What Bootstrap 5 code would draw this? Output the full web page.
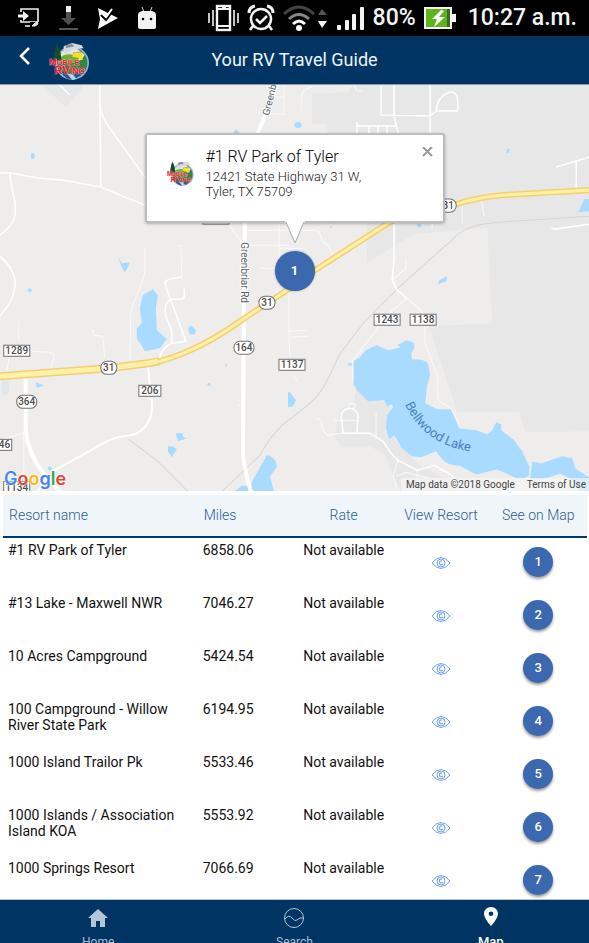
<!DOCTYPE html>
<html lang="en">
<head>
<meta charset="utf-8">
<meta name="viewport" content="width=device-width, initial-scale=1">
<title>Your RV Travel Guide</title>
<link href="https://cdn.jsdelivr.net/npm/bootstrap@5.3.0/dist/css/bootstrap.min.css" rel="stylesheet">
<style>
  :root { --navy: #003563; --pin: #3c68b0; }
  body { font-family: Roboto, "Liberation Sans", sans-serif; color: #111; }
  svg { display: block; flex: none; }
  .phone-status { height: 36px; background: #000; color: #f4f4f4; font-size: 23px; line-height: 36px; font-weight: 500; padding: 0 12px 0 18px; }
  .left-icons { gap: 19px; }
  .app-header { display: grid; grid-template-columns: 1fr auto 1fr; height: 48px; background: var(--navy); padding: 0 12px; }
  .app-header h1 { font-size: 18px; line-height: 24px; font-weight: 400; color: #eef3f8; }
  .back-btn { width: 24px; height: 36px; }
  .map-area { --bs-aspect-ratio: 69%; background: #eeedec; border-top: 1px solid #8f9aa8; }
  .callout { position: absolute; top: 48px; left: 0; height: auto; }
  .info-box { width: 300px; min-height: 90px; border: 2px solid #bdbdbd; border-radius: 3px; box-shadow: 0 1px 3px #0004; padding: 12px 8px 12px 20px; gap: 11px; }
  .info-box h2 { font-size: 16px; line-height: 20px; font-weight: 300; color: #000; margin-bottom: 2px; }
  .info-box address { font-size: 13px; line-height: 15px; font-weight: 300; color: #222; margin: 0; }
  .info-box button { width: 16px; height: 14px; }
  .tip { margin-top: -2px; z-index: 1; }
  .round-pin { width: 30px; height: 30px; border-radius: 50%; background: var(--pin); color: #fff; font-size: 13px; line-height: 30px; font-weight: 500; box-shadow: 0 2px 3px #0006; }
  .round-pin.big { width: 40px; height: 40px; margin-top: 7px; font-weight: 700; line-height: 40px; box-shadow: 0 0 2px #0006; }
  .attribution { position: absolute; top: auto; left: auto; right: 0; bottom: 0; width: auto; height: auto; background: #f5f5f5b0; color: #444; font-size: 10px; line-height: 13px; padding: 0 3px 0 5px; gap: 12px; }
  .g-brand { position: absolute; top: auto; left: 4px; bottom: 0; height: auto; width: auto; font-family: Inter, Roboto, sans-serif; font-size: 18px; line-height: 24px; font-weight: 600; text-shadow: 0 0 2px #fff, 0 0 2px #fff; }
  .resort-area { padding: 4px 2px 0 3px; }
  .resorts { table-layout: fixed; border-collapse: separate; border-spacing: 0; font-size: 14px; line-height: 16px; --bs-table-color: #111; }
  .resorts th { height: 43px; background: #f0f5fa; color: #2d6092; font-weight: 300; padding: 0 6px 2px; vertical-align: middle; }
  .resorts thead th { border-bottom: 2px solid #003a6b; }
  .resorts td { height: 53px; padding: 4px 5px 0; }
  .resorts td.pin-cell { padding-top: 9px; }
  .resorts td.eye-cell { padding-top: 18px; }
  .tabs-bar { height: 44px; background: var(--navy); border-top: 1px solid #b5c1cd; }
  .tabs-bar a { color: #a9bdd1; font-size: 12px; line-height: 14px; padding-top: 7px; gap: 6px; }
  .tabs-bar a.current { color: #fff; font-size: 13px; font-weight: 500; }
  .land { fill: #e7e7e7; }
  .water { fill: #a9daff; }
  .road { fill: none; stroke: #fff; stroke-width: 2; stroke-linejoin: round; }
  .lane { fill: none; stroke: #fafafa; stroke-width: 1; }
  .main-road { fill: none; stroke: #fff; stroke-width: 4; }
  .rail { fill: none; stroke: #d3d5d7; stroke-width: 1; }
  .sign { fill: #fff; stroke: #707070; stroke-width: 1; }
  .sign-text { font-size: 10px; font-weight: 500; fill: #4d4d4d; text-anchor: middle; }
  .street { font-size: 10px; fill: #56616b; stroke: #fff; stroke-width: 2px; paint-order: stroke; }
</style>
</head>
<body class="d-flex flex-column vh-100 overflow-hidden bg-white">

<svg width="0" height="0" class="position-absolute" aria-hidden="true">
  <symbol id="logo" viewBox="0 0 40 38">
    <circle cx="22" cy="20" r="16" fill="#8db5df"/>
    <circle cx="22" cy="20" r="14.500" fill="#37833f"/>
    <path d="M9 13Q14 5 25 5l9 7-3 5-20 1Z" fill="#dce6ee"/>
    <path d="M9 16q9-8 20-1l-3 5H9Z" fill="#74ae2f"/>
    <path d="M23 10l8-1v4l-8 1Z" fill="#a9825c"/>
    <path d="M24 10h8v7l-5-2-5-1Z" fill="#f7df22"/>
    <path d="M14 4l8-3 9 2 2 3-10 1-6 4-3-2Z" fill="#d6d9df"/>
    <path d="M16 3l6-1 2 2-8 2Z" fill="#7e8c9b"/>
    <path d="M8 1l2 5 1 4 1 8H4l1-7 1-5Z" fill="#164b2b"/>
    <path d="M13 28q7 2 9 8-7-1-10-7ZM24 29l9-3q-2 6-8 9Z" fill="#28508a"/>
    <path d="M17 30l6 1 3 4-4 1Z" fill="#b4d7ec"/>
    <g font-family="Liberation Sans, sans-serif" font-weight="700" fill="#ed1834" stroke="#f4d9e0" stroke-width=".5" paint-order="stroke">
      <text x="0" y="22" font-size="9">M<tspan font-size="7">OBILE</tspan></text>
      <text x="5" y="30" font-size="11">RV<tspan font-size="8">ING</tspan></text>
    </g>
  </symbol>
  <symbol id="eye" viewBox="0 0 20 14">
    <g fill="none" stroke="#70a5f4"><path d="M1 7Q10-4 19 7 10 18 1 7Z"/><circle cx="10" cy="7" r="4"/><path d="M11 5a2 2 0 1 0 1 3" stroke-width="1.200"/></g>
  </symbol>
</svg>

<div class="phone-status d-flex align-items-center justify-content-between flex-shrink-0">
  <div class="left-icons d-flex align-items-center">
    <svg width="22" height="22" viewBox="0 0 22 22" fill="none" stroke="#f2f2f2" stroke-width="1.600"><path d="M3 5V2h17v13H3v-2M7 19h6"/><path d="M0 9h6" stroke-width="3"/><path d="M5 4l6 5-6 5Z" fill="#f2f2f2" stroke="none"/><path d="M12 15h9v6h-9Z" fill="#000" stroke="none"/><path d="M14 19l3-3q3-2 3 0t-3 3Z" fill="#ddd" stroke-width="1"/></svg>
    <svg width="19" height="26" viewBox="0 0 19 26"><path d="M7 6h5v7h5l-7.500 7L2 13h5Z" fill="#505050"/><path d="M7 1h5v6H7Z" fill="#eee"/><path d="M0 23h19v2H0Z" fill="#555"/></svg>
    <svg width="21" height="23" viewBox="0 0 21 23"><path d="M1 1l20 10L1 22l2-10Z" fill="#fff"/><path d="M4 8l5 5 7-9" fill="none" stroke="#000" stroke-width="2"/><path d="M5 6l4 4 6-8" fill="none" stroke="#fff" stroke-width="2"/></svg>
    <svg width="20" height="25" viewBox="0 0 20 25"><path d="M5 1l2 5M15 1l-2 5" stroke="#ddd"/><path d="M1 9q0-3 4-4h10q4 1 4 4v12q0 2-3 2H4q-3 0-3-2Z" fill="#f2f2f2"/><circle cx="6" cy="13" r="1.300"/><circle cx="14" cy="13" r="1.300"/></svg>
  </div>
  <div class="d-flex align-items-center gap-2">
    <svg width="31" height="28" viewBox="0 0 31 28" fill="none" stroke="#f4f4f4" stroke-width="2"><path d="M1 9v10M5 6v16M26 6v16M30 9v10" stroke-width="1.600"/><rect x="9" y="2" width="13" height="24" stroke-width="2.400"/><path d="M9 5h13M14 3h4M9 22h13"/></svg>
    <svg width="28" height="28" viewBox="0 0 28 28" fill="none" stroke="#f4f4f4" stroke-width="2.500"><circle cx="14" cy="15" r="10"/><path d="M9 15l4 4 7-7M6 22l-3 4M22 22l3 4"/><path d="M2 9q0-6 6-7M26 9q0-6-6-7" stroke-width="3"/></svg>
    <svg width="46" height="28" viewBox="0 0 46 28" fill="none"><path d="M1 10q15-14 30 0" stroke="#444" stroke-width="3"/><path d="M6 15q10-9 20 0" stroke="#888" stroke-width="3"/><path d="M10 20q6-6 12 0" stroke="#fff" stroke-width="3"/><circle cx="16" cy="24" r="3" fill="#fff"/><path d="M35 11l4-6 5 6Z" fill="#555"/><path d="M35 17h9l-5 7Z" fill="#fff"/></svg>
    <svg width="28" height="26" viewBox="0 0 28 26" fill="#f4f4f4"><rect y="20" width="4" height="5" rx="1"/><rect x="8" y="15" width="4" height="10" rx="1"/><rect x="15" y="9" width="4" height="16" rx="1"/><rect x="23" y="2" width="4" height="23" rx="1"/></svg>
    <span>80%</span>
    <svg width="32" height="22" viewBox="0 0 32 22"><path d="M0 0h28v7h4v8h-4v7H0Z" fill="#f4f4f4"/><path d="M2 2h21v18H2Z" fill="#5db51b"/><path d="M23 2h3v18h-3Z" fill="#406a23"/><path d="M17 3l-9 9h5l-3 8 11-10h-6l5-6Z" fill="#fff"/></svg>
    <span class="ms-1">10:27 a.m.</span>
  </div>
</div>

<header class="app-header align-items-center flex-shrink-0">
  <div class="d-flex align-items-center gap-2">
    <button class="back-btn btn p-0 border-0 d-flex justify-content-center" aria-label="Back"><svg width="14" height="20" viewBox="0 0 14 20" class="mt-1"><path d="M12 2L4 10l8 8" fill="none" stroke="#fff" stroke-width="2.500"/></svg></button>
    <svg width="44" height="40" class="mt-1 ms-1"><use href="#logo"/></svg>
  </div>
  <h1 class="m-0">Your RV Travel Guide</h1>
</header>

<main class="d-flex flex-column flex-grow-1 overflow-hidden">
  <section class="map-area ratio flex-shrink-0 overflow-hidden" aria-label="Resort map">
    <svg viewBox="0 85 589 406" preserveAspectRatio="xMidYMid slice">
      <path class="land" d="M353 84H589V431L525 432 519 412H457L429 326 492 323 487 227 414 234 389 249 367 262V223H330L327 124H312V94L348 92ZM41 84H83V88L66 107ZM356 386L390 405 395 440 420 465 450 480 500 491H400L385 455 370 446H341L335 437 340 408 354 404Z"/>
      <path d="M2 380h7v14H2Z" fill="#e2e6ea"/>
      <g class="water">
        <ellipse cx="33" cy="156" rx="2" ry="3"/><path d="M118 257l4 6 8-1-3 7-2 3-3-5Z"/>
        <path d="M143 295L153 289 158 295 156 308 157 330 167 339 160 348 145 351 141 344 137 338V328L142 323 140 308ZM188 328L191 325 196 330 195 334 190 334ZM36 382L44 385 37 388ZM176 433L183 433V437L187 438 178 441ZM168 446L173 446 177 449 172 457 168 451ZM233 133L236 129 240 133ZM288 392H290L296 400 293 406 288 407ZM267 455Q275 456 277 466L270 476 274 491H250L252 481ZM235 491L242 485 248 486 249 491ZM578 212L584 199H589V211ZM438 284L439 280 447 276 446 281ZM417 223L421 224 421 227H417ZM506 153L507 149H510L508 153Z"/>
        <ellipse cx="298" cy="125" rx="3.500" ry="3"/><circle cx="331" cy="227" r="1"/><circle cx="50" cy="468" r="2"/><circle cx="30" cy="290" r="2"/><circle cx="226" cy="365" r="1"/><circle cx="209" cy="384" r="1.500"/><path d="M348 363h4v2h-4Z"/>
        <path d="M353 361L360 357 Q365 348 377 345L388 350 401 347 397 345 403 342Q406 338 414 343 415 349 411 353L412 359Q427 359 428 364L430 375 427 385 425 403 437 409 451 409 456 421 459 428 476 430 487 434 492 430 496 422 501 424 501 430 514 440 522 451 529 466V475Q523 479 517 478L497 469 476 474 459 465Q449 466 442 459L436 451 421 457 412 456 402 448 394 435 389 439 386 428 387 415 393 407 392 404 387 406 384 400 368 401 357 390 353 383Z"/>
        <path d="M532 461L541 463 562 456 572 458 575 468 589 477V491H580L570 478 560 473 545 478H530Z"/>
      </g>
      <path class="rail" d="M589 216L500 222Q475 224 469 228 460 231 455 237L400 286 363 323 339 355Q325 388 315 398L306 406 282 425Q268 439 260 455L222 491M129 439L157 460 188 491"/>
      <path class="lane" d="M145 248L145 272 140 288Q132 307 131 312L130 360M178 245L181 246 182 278M93 329L94 335 103 336 105 358M32 351L50 352Q56 354 54 359L51 368M19 321V338M10 355L7 372M284 84V114H270M273 97H284M313 87Q302 89 302 94L301 111M353 84L357 91H362M246 230H317Q320 230 322 241L328 245 333 254M279 223V259M246 245H290M230 226L242 242M260 268H275M280 248H303M289 288V338L290 356M293 375L297 381M289 331L307 330M290 337L309 336M238 405H243M277 288V294M0 440L26 432M24 432V491M462 204V224M481 199L484 216M432 223V228M392 280L406 268V258M407 298L389 313 353 360V383M315 418Q323 418 322 428L327 435 342 433M334 420H357M376 413V436M348 408L350 403 355 404V408M398 460L393 476 397 487M417 470V480M396 476L406 472 430 478M394 116V84M407 298L424 313 425 343 437 375 438 400 451 408 459 423"/>
      <path class="road" style="stroke-width:1.500" d="M0 173H11L38 178 62 180 101 187 145 205M100 84V104L101 184V187M100 104Q100 116 112 131L145 177M10 174L13 192Q18 208 14 220 8 230 0 235M0 256Q18 271 15 288 14 300 0 316M182 277Q166 278 165 283L168 292 186 341 172 343Q162 347 159 359M184 288Q186 299 181 299H172Q163 302 166 316L172 331V343M394 84V116L398 133M430 84V133M381 84V115L430 116 436 111Q437 98 447 93 453 90 457 96L458 107 457 111 436 111M357 122V133M357 126H396M369 126V133M378 126V133M387 126V133M394 223V258L392 280 397 290 407 298M576 161V188M556 167L576 161 589 157M551 228L554 229 589 224M59 84L70 95M342 433H370L383 441Q391 454 398 460L417 470 434 465 452 475 460 489M343 433L341 414 345 409 353 408 358 414 357 433"/>
      <path class="road" d="M148 365L151 395Q154 410 150 419 142 434 130 435 115 437 107 441L53 471 38 491"/>
      <path class="main-road" d="M277 84L258 133 245 215 244 288 243 455Q246 475 251 491M26 376V430Q29 455 43 472L60 491"/>
      <g fill="none">
        <path d="M589 190L503 195Q480 197 456 204 420 208 388 223L315 270 290 288 243 319Q200 350 160 361L148 363 109 368 0 376" stroke="#f4cf70" stroke-width="6"/>
        <path d="M160 361L148 363 109 368 0 376" stroke="#f4cf70" stroke-width="8"/>
        <path d="M589 190L503 195Q480 197 456 204 420 208 388 223L315 270 290 288 243 319Q200 350 160 361L148 363" stroke="#fff0a8" stroke-width="3"/>
        <path d="M158 361L148 363 109 368 0 376" stroke="#fff0a8" stroke-width="5"/>
      </g>
      <g class="sign">
        <rect x="4" y="345" width="26" height="11"/><rect x="139" y="385" width="22" height="11"/><rect x="-10" y="439" width="22" height="11"/><rect x="4" y="481" width="26" height="14"/><rect x="279" y="359" width="26" height="11"/><rect x="374" y="314" width="26" height="11"/><rect x="410" y="314" width="26" height="11"/><rect x="203" y="213" width="26" height="11"/>
        <rect x="101" y="361" width="16" height="13" rx="6"/><rect x="17" y="395" width="20" height="13" rx="6"/><rect x="259" y="296" width="16" height="13" rx="6"/><rect x="234" y="341" width="20" height="13" rx="6"/><rect x="440" y="199" width="16" height="13" rx="6"/>
      </g>
      <g class="sign-text">
        <text x="17" y="354">1289</text><text x="150" y="394">206</text><text x="2" y="448">146</text><text x="17" y="491">1134</text><text x="292" y="368">1137</text><text x="387" y="323">1243</text><text x="423" y="323">1138</text>
        <text x="109" y="371">31</text><text x="27" y="405">364</text><text x="267" y="306">31</text><text x="244" y="351">164</text><text x="448" y="209">31</text>
      </g>
      <text class="street" transform="translate(269 116) rotate(-76)">Greenbriar Rd</text>
      <text class="street" transform="translate(241 242) rotate(90)">Greenbriar Rd</text>
      <path id="lake-line" d="M405 404Q424 446 476 452" fill="none"/>
      <text font-size="13" fill="#4a7fc4"><textPath href="#lake-line">Bellwood Lake</textPath></text>
    </svg>
    <div class="callout d-flex flex-column align-items-center">
      <div class="info-box bg-white d-flex">
        <svg width="28" height="28" class="align-self-center mb-2"><use href="#logo"/></svg>
        <div class="flex-grow-1">
          <h2>#1 RV Park of Tyler</h2>
          <address>12421 State Highway 31 W,<br>Tyler, TX 75709</address>
        </div>
        <button class="btn p-0 border-0 align-self-start d-flex align-items-start" aria-label="Close"><svg width="16" height="10" viewBox="0 0 16 10"><path d="M4 0l9 9M13 0L4 9" stroke="#999" stroke-width="2"/></svg></button>
      </div>
      <svg class="tip" width="20" height="23" viewBox="0 0 20 23"><path d="M0 0l10 22L20 0Z" fill="#fff"/><path d="M1 1l9 21 9-21" fill="none" stroke="#aaa"/></svg>
      <button class="round-pin big btn p-0 border-0">1</button>
    </div>
    <div class="g-brand" aria-label="Google"><span style="color:#4285f4">G</span><span style="color:#ea4335">o</span><span style="color:#fbbc05">o</span><span style="color:#4285f4">g</span><span style="color:#34a853">l</span><span style="color:#ea4335">e</span></div>
    <div class="attribution d-flex"><span>Map data ©2018 Google</span><a href="#terms" class="text-reset text-decoration-none">Terms of Use</a></div>
  </section>

  <section class="resort-area flex-grow-1 overflow-hidden">
    <table class="resorts table table-borderless m-0">
      <colgroup><col class="col-4"><col class="col-2"><col class="col-2"><col class="col-2"><col class="col-2"></colgroup>
      <thead><tr><th>Resort name</th><th>Miles</th><th class="text-center">Rate</th><th class="text-center text-nowrap">View Resort</th><th class="text-center text-nowrap">See on Map</th></tr></thead>
      <tbody id="resort-rows"></tbody>
    </table>
  </section>
</main>

<nav class="tabs-bar d-flex flex-shrink-0 overflow-hidden">
  <a href="#home" class="col d-flex flex-column align-items-center text-decoration-none"><svg width="22" height="22" viewBox="0 0 22 22"><path d="M11 2l10 9h-3v9h-5v-6H9v6H4v-9H1Z" fill="#b3c5d7"/></svg>Home</a>
  <a href="#search" class="col d-flex flex-column align-items-center text-decoration-none"><svg width="22" height="22" viewBox="0 0 22 22" fill="none" stroke="#b3c5d7"><circle cx="11" cy="11" r="9.500"/><path d="M2 12q4-5 7-1t5 2q3-3 6-2"/></svg>Search</a>
  <a href="#map" class="current col d-flex flex-column align-items-center text-decoration-none"><svg width="22" height="22" viewBox="0 0 22 22"><path d="M11 0C7 0 4 3 4 6.500 4 12 11 19 11 19s7-7 7-12.500C18 3 15 0 11 0Zm0 4.500a2.300 2.300 0 1 1 0 4.600 2.300 2.300 0 0 1 0-4.600Z" fill="#fff"/></svg>Map</a>
</nav>

<script src="https://cdn.jsdelivr.net/npm/bootstrap@5.3.0/dist/js/bootstrap.bundle.min.js"></script>
<script>
  const resorts = [
    ['#1 RV Park of Tyler', '6858.06'],
    ['#13 Lake - Maxwell NWR', '7046.27'],
    ['10 Acres Campground', '5424.54'],
    ['100 Campground - Willow River State Park', '6194.95'],
    ['1000 Island Trailor Pk', '5533.46'],
    ['1000 Islands / Association Island KOA', '5553.92'],
    ['1000 Springs Resort', '7066.69']
  ];
  document.getElementById('resort-rows').innerHTML = resorts.map(([name, miles], i) => `
    <tr>
      <td>${name}</td><td>${miles}</td><td class="text-center text-nowrap">Not available</td>
      <td class="eye-cell"><a href="#resort-${i + 1}" class="d-flex justify-content-center" aria-label="View ${name}"><svg width="20" height="14"><use href="#eye"/></svg></a></td>
      <td class="pin-cell text-center"><button class="round-pin btn p-0 border-0">${i + 1}</button></td>
    </tr>`).join('');
</script>
</body>
</html>
